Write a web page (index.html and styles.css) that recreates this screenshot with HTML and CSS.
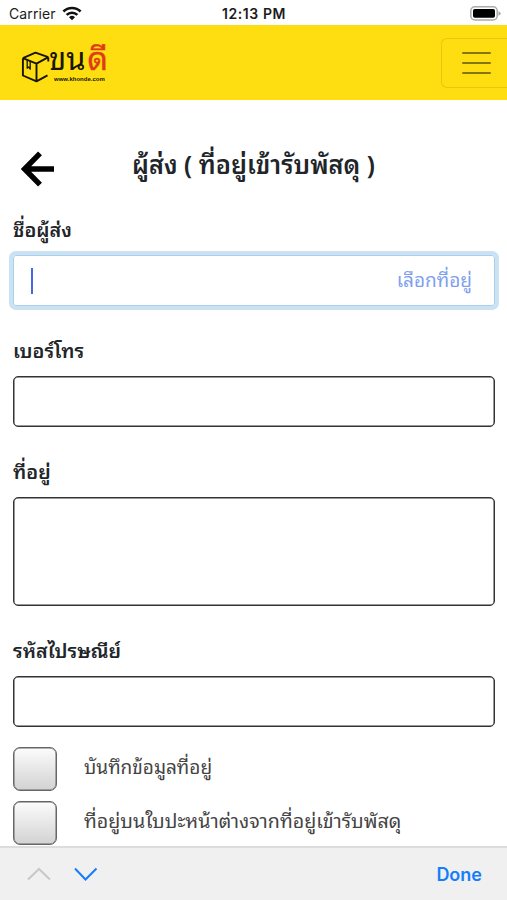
FILE: index.html
```html
<!DOCTYPE html>
<html lang="th">
<head>
<meta charset="utf-8">
<title>ขนดี</title>
<link rel="stylesheet" href="styles.css">
</head>
<body>
<div class="screen">
  <div class="status">
    <div class="carrier"><span>Carrier</span>
      <svg class="wifi" width="20" height="15" viewBox="0 0 20 15" fill="none" stroke="#111" stroke-width="2.6"><path d="M1.4 5.5a12.3 12.3 0 0 1 17.2 0M4.6 8.9a7.8 7.8 0 0 1 10.8 0"/><path d="M10 14.2 7 11.2a4.3 4.3 0 0 1 6 0z" fill="#111" stroke="none"/></svg>
    </div>
    <div class="time">12:13 PM</div>
    <svg class="battery" width="31" height="15" viewBox="0 0 31 15"><rect x=".8" y=".8" width="26.4" height="13.2" rx="4" fill="#fff" stroke="#aaa" stroke-width="1.5"/><rect x="3" y="3" width="22" height="8.8" rx="1.8"/><path d="M28.4 5.2q2.4.7 2.4 2.3t-2.4 2.3z" fill="#aaa"/></svg>
  </div>
  <header class="navbar">
    <div class="logo">
      <svg width="29" height="32" viewBox="0 0 29 32" fill="none" stroke="#171600" stroke-width="1.9" stroke-linejoin="round"><path d="M1.9 7.2 14.5 1.6l12.8 4.6M1.9 7.2v17.3L15.5 30.4l11-6M1.9 7.2 15.5 12.6l11.8-6.4M15.5 12.6v17.8M27.3 6.2v4.3"/><path d="M6.2 9v8.2l1.5-1.3 1.5 2.3v-7.8" stroke-width="1.3"/></svg>
      <div class="wordmark">
        <div class="brand"><span class="kon">ขน</span><span class="dee">ดี</span></div>
        <div class="url">www.khonde.com</div>
      </div>
    </div>
    <div class="toggler"><i></i><i></i><i></i></div>
  </header>
  <main>
    <div class="heading">
      <svg class="back" width="34" height="36" viewBox="0 0 34 36" fill="none" stroke="#000" stroke-width="5.4"><path d="M19 2.4 3.6 18 19 33.6M4 18h29"/></svg>
      <h1><span>ผู้ส่ง ( ที่อยู่เข้ารับพัสดุ )</span></h1>
    </div>
    <div class="label l-name"><span>ชื่อผู้ส่ง</span></div>
    <div class="field focused"><span class="caret"></span><span class="pick">เลือกที่อยู่</span></div>
    <div class="label"><span>เบอร์โทร</span></div>
    <div class="field"></div>
    <div class="label"><span>ที่อยู่</span></div>
    <div class="field area"></div>
    <div class="label"><span>รหัสไปรษณีย์</span></div>
    <div class="field"></div>
    <div class="checks">
      <div class="check"><span class="box"></span><span class="c-save">บันทึกข้อมูลที่อยู่</span></div>
      <div class="check"><span class="box"></span><span class="c-diff">ที่อยู่บนใบปะหน้าต่างจากที่อยู่เข้ารับพัสดุ</span></div>
    </div>
  </main>
  <footer class="accessory">
    <svg width="72" height="16" viewBox="0 0 72 16" fill="none" stroke-width="2"><path d="M1 13.5 12 3l11 10.5" stroke="#c8c8c8"/><path d="M48 2.5 58.5 13.5 69.5 2.5" stroke="#147efb"/></svg>
    <span class="done">Done</span>
  </footer>
</div>
</body>
</html>
```
FILE: styles.css
```css
* { box-sizing: border-box; }
body {
  margin: 0;
  background: #fff;
  color: #212529;
  font-family: "Noto Sans Thai Looped", Thonburi, Loma, Garuda, Umpush, Waree, "Liberation Sans", sans-serif;
}
.screen {
  width: 507px;
  height: 900px;
  overflow: hidden;
  display: flex;
  flex-direction: column;
}
.status {
  height: 25px;
  flex: none;
  display: grid;
  grid-template-columns: 1fr auto 1fr;
  align-items: center;
  padding: 2px 6px 0 9px;
  font-family: Inter, sans-serif;
  font-size: 14px;
  color: #1c1c1c;
}
.carrier { display: flex; align-items: center; gap: 6px; letter-spacing: .1px; }
.time { font-weight: 600; letter-spacing: .6px; margin-left: -2px; }
.battery { justify-self: end; }
.navbar {
  height: 75px;
  flex: none;
  display: flex;
  align-items: center;
  justify-content: space-between;
  background: #ffde11;
  padding-left: 21px;
}
.logo { display: flex; height: 40px; align-items: flex-end; }
.wordmark { width: 62px; height: 39px; margin-left: -1px; display: flex; flex-direction: column; justify-content: flex-end; }
.brand { display: flex; align-items: baseline; line-height: 24px; height: 32px; color: #171600; }
.kon { font-size: 31px; }
.dee { font-size: 32px; color: #df3b18; margin-left: 2px; -webkit-text-stroke: .4px #df3b18; }
.url { font: bold 6px/7px "Liberation Sans", sans-serif; color: #171600; padding-left: 5px; }
.toggler {
  width: 66px;
  height: 50px;
  border: 1px solid #e6c80e;
  border-right: 0;
  border-radius: 6px 0 0 6px;
  display: flex;
  flex-direction: column;
  justify-content: center;
  gap: 8px;
  padding-left: 20px;
}
.toggler i { width: 29px; height: 2px; background: #86750c; border-radius: 1px; }
main { flex: 1; min-height: 0; overflow: hidden; padding: 45px 13px 0; }
.heading { display: grid; grid-template-columns: 34px 1fr 34px; align-items: center; height: 46px; padding: 0 8px; }
.back { margin-top: 2px; }
h1 { margin: 0; margin-top: -11px; text-align: center; font-size: 25.2px; line-height: 36px; font-weight: 600; white-space: nowrap; }
.label { height: 32px; line-height: 26px; font-size: 19.7px; font-weight: 600; white-space: nowrap; margin: 30px 0 8px; }
.l-name { margin: 24px 0 8px; }
.field { height: 51px; width: 482px; border: 1px solid #333; border-radius: 5px; box-shadow: inset 0 0 0 .5px #333; }
.area { height: 109px; }
.focused {
  border-color: #a9d0ee;
  border-radius: 3px;
  box-shadow: 0 0 0 4px #cbe2f2;
  display: flex;
  align-items: center;
  justify-content: space-between;
  padding: 0 22px 0 17px;
}
.caret { width: 2px; height: 26px; background: #4169e1; }
.pick { color: #7f9ff0; font-size: 19px; white-space: nowrap; padding-bottom: 4px; }
.checks { margin-top: 20px; display: grid; gap: 10px; }
.check { display: flex; align-items: center; gap: 27px; height: 44px; font-size: 19px; color: #444; white-space: nowrap; }
.c-save, .c-diff { padding-bottom: 8px; }
.c-diff { font-size: 19.6px; }
.box { width: 44px; height: 44px; flex: none; border: 1px solid #666; border-radius: 7px; background: linear-gradient(#fcfcfc, #d2d2d2); box-shadow: inset 0 0 0 .5px #666; }
.accessory {
  height: 54px;
  flex: none;
  border-top: 2px solid #dcdcdc;
  background: #f0f0f0;
  display: flex;
  align-items: center;
  justify-content: space-between;
  padding: 0 25px 0 27px;
}
.done { font: 600 18px Inter, sans-serif; color: #147efb; }
```
